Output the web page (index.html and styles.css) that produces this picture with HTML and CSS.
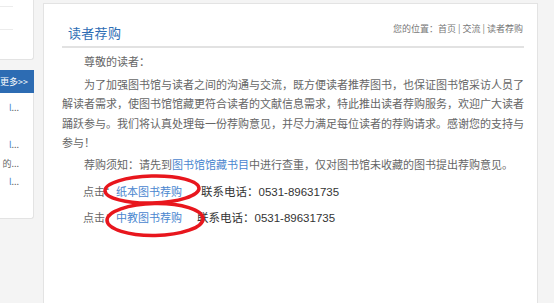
FILE: index.html
```html
<!DOCTYPE html>
<html lang="zh-CN">
<head>
  <meta charset="UTF-8" />
  <meta name="viewport" content="width=device-width, initial-scale=1.0" />
  <title>读者荐购</title>
  <link rel="stylesheet" href="styles.css">
</head>
<body>
  <div class="side">
    <div class="side-inner">
      <div class="side-box">
        <ul class="side-top">
          <li></li>
          <li></li>
        </ul>
      </div>
      <div class="side-bar">更多&gt;&gt;</div>
      <div class="side-box side-list">
        <ul>
          <li><span class="blue">l</span>...</li>
          <li></li>
          <li><span class="blue">l</span>...</li>
          <li>的...</li>
          <li><span class="blue">l</span>...</li>
        </ul>
      </div>
    </div>
  </div>

  <div class="main">
    <div class="main-head">
      <h2>读者荐购</h2>
      <div class="crumb">您的位置：首页 | 交流 | 读者荐购</div>
    </div>

    <div class="content">
      <p class="greet">尊敬的读者：</p>
      <p class="intro">为了加强图书馆与读者之间的沟通与交流，既方便读者推荐图书，也保证图书馆采访人员了解读者需求，使图书馆馆藏更符合读者的文献信息需求，特此推出读者荐购服务，欢迎广大读者踊跃参与。我们将认真处理每一份荐购意见，并尽力满足每位读者的荐购请求。感谢您的支持与参与！</p>
      <p class="notice">荐购须知：请先到<a href="#">图书馆馆藏书目</a>中进行查重，仅对图书馆未收藏的图书提出荐购意见。</p>

      <div class="links">
        <p class="row">点击：<a href="#">纸本图书荐购</a><span class="tel">联系电话：0531-89631735</span></p>
        <p class="row">点击：<a href="#">中教图书荐购</a><span class="tel tel2">联系电话：0531-89631735</span></p>

        <!-- 红圈标注 -->
        <svg class="marks" viewBox="95 168 120 72" width="120" height="72">
          <ellipse cx="151" cy="188.5" rx="47" ry="13.5" transform="rotate(-1.5 151 188.5)" />
          <ellipse cx="154" cy="218.5" rx="48" ry="16" transform="rotate(-1 154 218.5)" />
        </svg>
      </div>
    </div>
  </div>
</body>
</html>
```

FILE: styles.css
```css
html, body {
  height: 100%;
  overflow: hidden;
}

body {
  margin: 0;
  background: #f4f4f4;
  font-family: "Noto Sans CJK SC", sans-serif;
  color: #666;
  display: flex;
  align-items: flex-start;
}

ul {
  list-style: none;
  margin: 0;
  padding: 0;
}

/* 左侧栏（页面被横向滚动，只露出一截） */
.side {
  width: 34px;
  flex-shrink: 0;
  overflow: hidden;
  display: flex;
  justify-content: flex-end;
}

.side-inner {
  width: 200px;
  flex-shrink: 0;
}

.side-box {
  background: #fff;
  border: 1px solid #e3e3e3;
  border-top: none;
  border-radius: 0 0 3px 0;
}

.side-top {
  height: 59px;
  padding-right: 20px;
  margin-left: 10px;
}

.side-top li {
  height: 22px;
  border-bottom: 1px solid #ececec;
}

.side-top li:first-child {
  height: 6px;
}

.side-bar {
  margin-top: 10px;
  height: 23px;
  line-height: 23px;
  background: #2d6cb3;
  color: #fff;
  font-size: 9px;
  text-align: right;
  padding-right: 6px;
}

.side-list {
  height: 125px;
}

.side-list ul {
  padding: 6px 0 0 10px;
}

.side-list li {
  font-size: 9px;
  line-height: 18.5px;
  height: 18.5px;
  color: #666;
  text-align: right;
  padding-right: 14px;
}

.blue {
  color: #4a86cf;
}

/* 主内容 */
.main {
  margin: 3px 0 0 9px;
  width: 495px;
  height: 340px;
  flex-shrink: 0;
  box-sizing: border-box;
  background: #fff;
  border: 1px solid #e3e3e3;
  padding: 0 13px 0 18px;
}

.main-head {
  display: flex;
  justify-content: space-between;
  align-items: flex-end;
  padding: 19px 0 5px;
  border-bottom: 2px solid #e2e2e2;
}

.main-head h2 {
  margin: 0;
  padding-left: 6px;
  font-size: 13px;
  line-height: 16px;
  font-weight: normal;
  color: #2e6db4;
  letter-spacing: 0.3px;
}

.crumb {
  font-size: 9px;
  line-height: 12px;
  color: #777;
  margin: 0 1px 6px 0;
}

.content {
  width: 463px;
  font-size: 11px;
  line-height: 19.5px;
}

.content p {
  margin: 0;
}

.content a {
  color: #4a86cf;
  text-decoration: none;
}

.greet {
  margin-top: 4px !important;
  text-indent: 22px;
}

.intro {
  margin-top: 3px !important;
  text-indent: 22px;
}

.notice {
  margin-top: 2px !important;
  text-indent: 22px;
}

.links {
  position: relative;
  margin-top: 7px;
}

.row {
  padding-left: 21px;
  line-height: 20px;
  margin-bottom: 5px !important;
}

.tel {
  margin-left: 19px;
  font-family: "Liberation Sans", "Noto Sans CJK SC", sans-serif;
  font-size: 11.5px;
  color: #333;
}

.tel2 {
  margin-left: 15px;
}

.marks {
  position: absolute;
  left: 34px;
  top: -12px;
  overflow: visible;
}

.marks ellipse {
  fill: none;
  stroke: #e8161d;
  stroke-width: 3.5;
}
```
